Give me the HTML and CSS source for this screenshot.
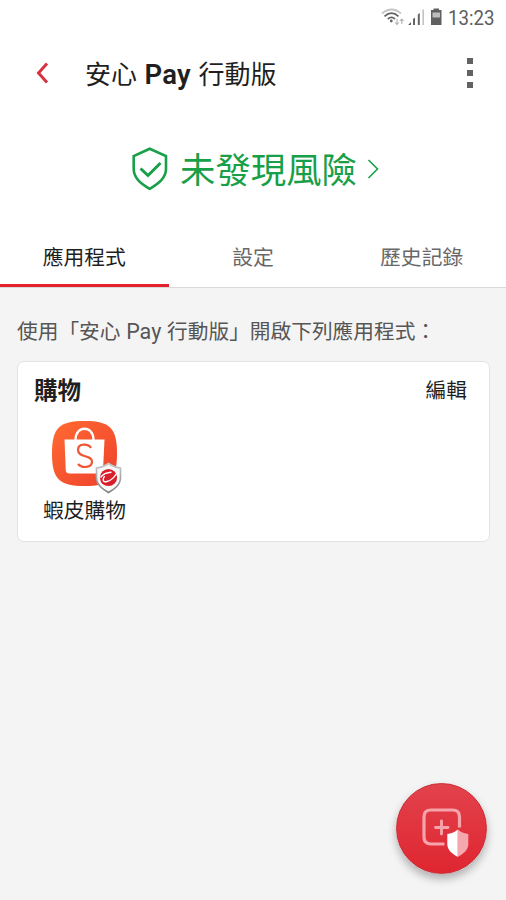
FILE: index.html
```
<!DOCTYPE html>
<html lang="zh-Hant">
<head>
<meta charset="utf-8">
<title>安心 Pay 行動版</title>
<link rel="stylesheet" href="styles.css">
</head>
<body>
<div class="screen">
  <div class="status">
    <svg class="status-icons" width="62" height="24" viewBox="0 0 62 24" fill="none">
      <path d="M1 8.500Q10.500 0.500 20 8.500" stroke="#c4c4c4" stroke-width="1.700"/>
      <path d="M3.500 11.300Q10.500 5 17.500 11.300M6.800 14Q10.500 10.800 14 14" stroke="#636363" stroke-width="1.700"/>
      <circle cx="10.300" cy="16" r="1.400" fill="#636363"/>
      <path d="M16 14v5M14.200 17.500 16 19.500l1.800-2M20.800 19v-5M19 16 20.800 14l1.800 2" stroke="#b0b0b0" stroke-width="1.100"/>
      <path d="M27 20l3-3v3zM32 20v-6l2-1.500V20zM36.800 20V9.500l2-1.500v12z" fill="#636363"/>
      <path d="M42.200 20V4.500" stroke="#c4c4c4" stroke-width="1.600"/>
      <path d="M50 5h2.500V3.500H58V5h2.500v15H50z" fill="#606060"/>
      <path d="M51.500 7.500h7.500V12.500h-7.500z" fill="#bdbdbd"/>
    </svg>
    <span class="clock">13:23</span>
  </div>
  <header class="header">
    <svg class="back" width="14" height="22" viewBox="0 0 14 22" fill="none"><path d="M11 1.500 2.500 11l8.500 9.500" stroke="#d5323b" stroke-width="2.900"/></svg>
    <h1 class="title">安心 <b>Pay</b> 行動版</h1>
    <svg class="more" width="6" height="30" viewBox="0 0 6 30" fill="#626262"><path d="M0 0h6v6H0zM0 12h6v6H0zM0 24h6v6H0z"/></svg>
  </header>
  <section class="banner">
    <svg class="shield" width="36" height="44" viewBox="0 0 36 44" fill="none" stroke="#18a048"><path d="M17.700 1.700 1.700 9v13c0 9 7 14.500 16 19.800C26.500 36.500 34 31 34 22V9z" stroke-width="2.600"/><path d="m8.500 21.500 7.500 7 12.500-12.500" stroke-width="3"/></svg>
    <span class="result">未發現風險</span>
    <svg class="next" width="12" height="20" viewBox="0 0 12 20" fill="none"><path d="m1.500 1 9 9-9 9" stroke="#18a048" stroke-width="1.600"/></svg>
  </section>
  <nav class="tabs">
    <span class="tab active">應用程式</span>
    <span class="tab">設定</span>
    <span class="tab">歷史記錄</span>
  </nav>
  <main class="content">
    <p class="intro">使用「安心 <span class="latin">Pay</span> 行動版」開啟下列應用程式：</p>
    <section class="card">
      <div class="card-head"><h2>購物</h2><span class="edit">編輯</span></div>
      <div class="app">
        <svg class="app-icon" width="76" height="76" viewBox="0 0 76 76">
          <defs>
            <linearGradient id="orange" x1="0" y1="0" x2="1" y2="1"><stop stop-color="#ff6b31"/><stop offset="1" stop-color="#ef402d"/></linearGradient>
            <linearGradient id="silver" x1="0" y1="0" x2="0" y2="1"><stop stop-color="#c9c9c9"/><stop offset="1" stop-color="#808080"/></linearGradient>
          </defs>
          <path d="M6 33.500C6 8 13 1 38.500 1S71 8 71 33.500 64 66 38.500 66 6 59 6 33.500z" fill="url(#orange)"/>
          <path d="M29.500 20c0-15 18-15 18 0" fill="none" stroke="#fff" stroke-width="2.300"/>
          <path d="M18.500 19.500h40l-1.500 31q-.2 3-3.500 3H23.500q-3.500 0-3.700-3z" fill="#fff"/>
          <path d="M45 28C43 24 32 22.500 32 30c0 8 14 4.500 14 11.500 0 6.500-10 7-14 2.500" fill="none" stroke="#f15634" stroke-width="2.200"/>
          <path d="M62.500 43.500c4 3 8 4 12 4.500v9.500c0 8-7 12-12 15-5-3-12-7-12-15V48c4-.5 8-1.500 12-4.500z" fill="#f8f8f8" stroke="url(#silver)" stroke-width="1.600"/>
          <circle cx="62.500" cy="57.500" r="8.600" fill="#d81f2a"/>
          <path d="M54.500 57.500C57 54 60.500 52.500 65.500 52.300M58.500 56c-2.500 4.500-1 6.500 2.500 5.500 3.500-.8 7-3.500 9.500-8" fill="none" stroke="#fff" stroke-width="1.400"/>
          <path d="M54.500 61c3.500 4 11 3 16.500-5.500-1 6-6 9.500-10.500 9.500-3 0-5-1.500-6-4z" fill="#d81f2a"/>
        </svg>
        <span class="app-name">蝦皮購物</span>
      </div>
    </section>
  </main>
  <div class="fab">
    <svg width="48" height="52" viewBox="0 0 48 52" fill="none">
      <path d="M37.500 21.500V11q0-7-7-7H9Q2 4 2 11v20q0 7 7 7h13.500" stroke="#f4a4aa" stroke-width="3.200"/>
      <path d="M19.500 15v13M13.500 21.500h12.500" stroke="#f4a4aa" stroke-width="2.900" stroke-linecap="round"/>
      <path d="M35.800 23.500c-3.500 3-7 4-10.500 4.500V38c0 6.500 5 9.500 10.500 13z" fill="#fff"/>
      <path d="M35.800 23.500c3.500 3 7 4 10.500 4.500V38c0 6.500-5 9.500-10.500 13z" fill="#f4a8ae"/>
    </svg>
  </div>
</div>
</body>
</html>
```
FILE: styles.css
```
* { box-sizing: border-box; }
body { margin: 0; font-family: Roboto, "Noto Sans CJK TC", sans-serif; color: #1f1f1f; }
h1, h2, p { margin: 0; font-weight: 400; white-space: nowrap; }
svg { display: block; flex: none; }
.screen { position: relative; height: 900px; background: #f4f4f4; display: flex; flex-direction: column; overflow: hidden; }
.status { height: 36px; padding: 5px 12px 0 0; display: flex; justify-content: flex-end; background: #fff; }
.status-icons { margin-right: 5px; }
.clock { width: 46px; font-size: 20.5px; line-height: 26px; color: #5e5e5e; transform: scaleX(.91); transform-origin: left; white-space: nowrap; }
.header { height: 76px; padding: 0 33px 2px 36px; display: flex; align-items: center; background: #fff; }
.title { margin-left: 35px; padding-top: 4px; flex: 1; font-size: 26px; line-height: 38px; }
.title b { font-weight: 600; font-size: 27.500px; line-height: 1; letter-spacing: .3px; margin: 0 1px; }
.banner { height: 116px; padding: 0 0 2px 132px; display: flex; align-items: center; background: #fff; }
.result { margin-left: 12px; padding-top: 4px; font-size: 35.400px; line-height: 52px; color: #18a048; }
.next { margin-left: 10px; }
.tabs { height: 60px; display: grid; grid-template-columns: repeat(3, 1fr); background: #fff; border-bottom: 1px solid #d9d9d9; }
.tab { height: 59px; text-align: center; font-size: 20.800px; line-height: 60px; color: #686868; }
.tab.active { color: #1f1f1f; box-shadow: inset 0 -3px #e3202c; }
.content { padding: 29px 16px 0 17px; }
.intro { font-size: 20.700px; line-height: 30px; color: #565656; }
.latin { font-size: 21.500px; line-height: 1; margin: 0 .6px; }
.card { margin-top: 14px; height: 181px; padding: 13px 22px 0 17px; background: #fff; border: 1px solid #e3e3e3; border-radius: 7px; }
.card-head { display: flex; justify-content: space-between; align-items: center; height: 32px; }
.card h2 { margin-left: -1px; font-size: 23.500px; font-weight: 700; line-height: 32px; }
.edit { font-size: 20.700px; line-height: 32px; }
.app { width: 98px; margin-top: 13px; display: flex; flex-direction: column; align-items: center; }
.app-name { padding-left: 1px; font-size: 20.700px; line-height: 30px; }
.fab { position: absolute; left: 396px; top: 783px; width: 91px; height: 91px; border-radius: 50%; padding: 22px 0 0 25px; background: linear-gradient(#e2424d, #df2630); border: 1px solid #c72c37; box-shadow: 0 5px 8px rgba(0,0,0,.28); }
```
